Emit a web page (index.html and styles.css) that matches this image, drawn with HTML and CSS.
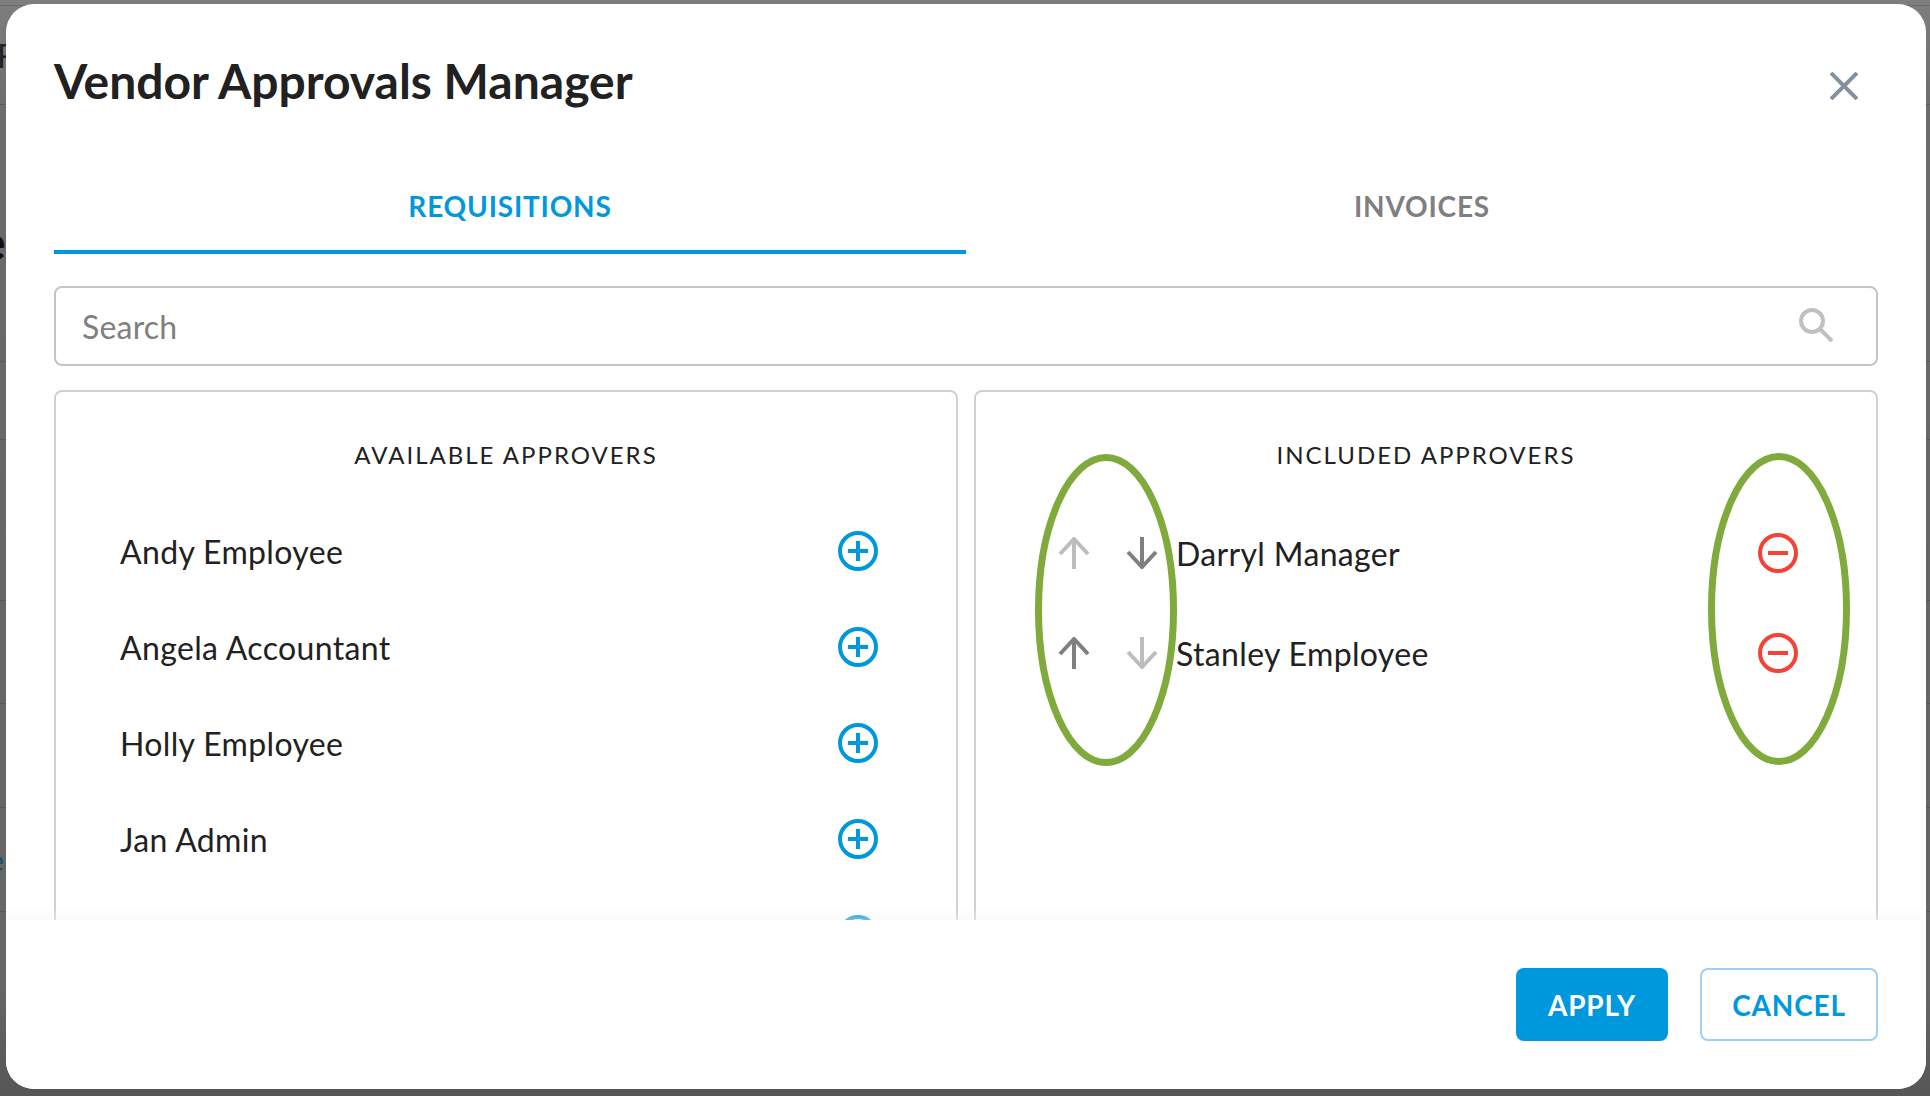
FILE: index.html
```html
<!DOCTYPE html>
<html lang="en">
<head>
<meta charset="utf-8">
<title>Vendor Approvals Manager</title>
<link rel="stylesheet" href="styles.css">
</head>
<body>
<div class="backdrop">
  <i class="bline l1"></i><i class="bline l2"></i><i class="bline l3"></i><i class="bline l4"></i>
  <i class="bline l5"></i><i class="bline l6"></i><i class="bline l7"></i><i class="bline l8"></i>
  <span class="bletter b-f">F</span>
  <span class="bletter b-e">e</span>
  <span class="bletter b-c">e</span>
</div>
<div class="modal">
  <div class="modal-scroll">
    <header class="modal-head">
      <h1 class="modal-title">Vendor Approvals Manager</h1>
      <svg class="close" viewBox="0 0 28 28"><path d="M1 1L27 27M27 1L1 27"/></svg>
    </header>
    <nav class="tabs">
      <div class="tab tab-active">REQUISITIONS</div>
      <div class="tab">INVOICES</div>
    </nav>
    <div class="search">
      <span class="search-text">Search</span>
      <svg class="search-icon" viewBox="0 0 36 36"><circle cx="13" cy="13" r="11"/><path d="M21 21L33 33"/></svg>
    </div>
    <div class="panels">
      <section class="panel">
        <h2 class="panel-title">AVAILABLE APPROVERS</h2>
        <ul class="avail">
          <li class="avail-row"><span class="avail-name">Andy Employee</span><svg class="circle-icon plus" viewBox="0 0 40 40"><circle cx="20" cy="20" r="18"/><path d="M10 20H30M20 10V30"/></svg></li>
          <li class="avail-row"><span class="avail-name">Angela Accountant</span><svg class="circle-icon plus" viewBox="0 0 40 40"><circle cx="20" cy="20" r="18"/><path d="M10 20H30M20 10V30"/></svg></li>
          <li class="avail-row"><span class="avail-name">Holly Employee</span><svg class="circle-icon plus" viewBox="0 0 40 40"><circle cx="20" cy="20" r="18"/><path d="M10 20H30M20 10V30"/></svg></li>
          <li class="avail-row"><span class="avail-name">Jan Admin</span><svg class="circle-icon plus" viewBox="0 0 40 40"><circle cx="20" cy="20" r="18"/><path d="M10 20H30M20 10V30"/></svg></li>
          <li class="avail-row"><span class="avail-name"></span><svg class="circle-icon plus" viewBox="0 0 40 40"><circle cx="20" cy="20" r="18"/><path d="M10 20H30M20 10V30"/></svg></li>
        </ul>
      </section>
      <section class="panel">
        <h2 class="panel-title">INCLUDED APPROVERS</h2>
        <ul class="incl">
          <li class="incl-row">
            <svg class="arrow off" viewBox="0 0 32 32"><path d="M16 32V2M2 17L16 2L30 17"/></svg>
            <svg class="arrow on" viewBox="0 0 32 32"><path d="M16 0V30M2 15L16 30L30 15"/></svg>
            <span class="incl-name">Darryl Manager</span>
            <svg class="circle-icon minus" viewBox="0 0 40 40"><circle cx="20" cy="20" r="18"/><path d="M10 20H30"/></svg>
          </li>
          <li class="incl-row">
            <svg class="arrow on" viewBox="0 0 32 32"><path d="M16 32V2M2 17L16 2L30 17"/></svg>
            <svg class="arrow off" viewBox="0 0 32 32"><path d="M16 0V30M2 15L16 30L30 15"/></svg>
            <span class="incl-name">Stanley Employee</span>
            <svg class="circle-icon minus" viewBox="0 0 40 40"><circle cx="20" cy="20" r="18"/><path d="M10 20H30"/></svg>
          </li>
        </ul>
      </section>
    </div>
    <div class="fade"></div>
  </div>
  <footer class="modal-foot">
    <button class="btn btn-apply">APPLY</button>
    <button class="btn btn-cancel">CANCEL</button>
  </footer>
  <svg class="oval oval-a" viewBox="0 0 142 312"><ellipse cx="71" cy="156" rx="67.5" ry="152.5"/></svg>
  <svg class="oval oval-b" viewBox="0 0 142 312"><ellipse cx="71" cy="156" rx="67.5" ry="152.5"/></svg>
</div>
</body>
</html>
```
FILE: styles.css
```css
* { box-sizing: border-box; }
html, body { margin: 0; height: 100%; }
body {
  position: relative;
  width: 1930px;
  height: 1096px;
  overflow: hidden;
  padding: 4px 4px 7px 6px;
  background: linear-gradient(180deg, #7e7e7e 0%, #6c6c6c 10%, #666 50%, #666 90%, #565656 100%);
  font-family: "Lato", "Liberation Sans", sans-serif;
  color: #212121;
}
.backdrop {
  position: absolute;
  inset: 0;
  overflow: hidden;
}
.bline {
  position: absolute;
  left: 0;
  width: 100%;
  height: 1px;
  background: rgba(0,0,0,.14);
}
.l1 { top: 5px; }
.l2 { top: 104px; }
.l3 { top: 361px; }
.l4 { top: 439px; }
.l5 { top: 600px; }
.l6 { top: 703px; }
.l7 { top: 807px; }
.l8 { top: 911px; }
.bletter {
  position: absolute;
  line-height: 1;
}
.b-f { left: -3px; top: 40px; font-size: 32px; color: #222; }
.b-e { left: -20px; top: 218px; font-size: 48px; font-weight: 700; color: #111; }
.b-c { left: -11px; top: 846px; font-size: 28px; color: #0f4f70; }
.modal {
  position: relative;
  width: 1920px;
  height: 1085px;
  background: #fff;
  border-radius: 28px;
  overflow: hidden;
  display: flex;
  flex-direction: column;
}
.modal-scroll {
  position: relative;
  height: 916px;
  flex: none;
  overflow: hidden;
  padding: 0 48px;
}
.modal-head {
  display: flex;
  align-items: center;
  justify-content: space-between;
  height: 156px;
}
.modal-title {
  margin: 0;
  font-size: 48px;
  font-weight: 700;
  line-height: 1;
  position: relative;
  top: -1px;
}
.close {
  width: 28px;
  height: 28px;
  margin-right: 20px;
  margin-top: 8px;
  fill: none;
  stroke: #82909f;
  stroke-width: 4;
}
.tabs {
  display: flex;
  width: 1824px;
  height: 94px;
}
.tab {
  flex: 1;
  text-align: center;
  font-size: 28px;
  font-weight: 700;
  letter-spacing: .8px;
  color: #7f7f7f;
  line-height: 34px;
  padding-top: 29px;
}
.tab-active {
  color: #0098dd;
  border-bottom: 4px solid #0098dd;
}
.search {
  display: flex;
  align-items: center;
  justify-content: space-between;
  width: 1824px;
  height: 80px;
  margin-top: 32px;
  padding: 0 41px 0 26px;
  border: 2px solid #c4c4c4;
  border-radius: 8px;
}
.search-text {
  font-size: 32px;
  letter-spacing: .2px;
  color: #7f7f7f;
}
.search-icon {
  width: 36px;
  height: 36px;
  fill: none;
  stroke: #c0c0c0;
  stroke-width: 4;
}
.panels {
  display: flex;
  gap: 16px;
  width: 1824px;
  margin-top: 24px;
}
.panel {
  width: 904px;
  height: 700px;
  border: 2px solid #d0d0d0;
  border-radius: 8px;
}
.panel-title {
  margin: 48px 0 0;
  text-align: center;
  font-size: 24px;
  font-weight: 400;
  letter-spacing: 2px;
  line-height: 30px;
}
.avail, .incl { list-style: none; margin: 0; padding: 0; }
.avail { padding: 33px 78px 0 64px; }
.avail-row {
  display: flex;
  align-items: center;
  justify-content: space-between;
  height: 96px;
  font-size: 32px;
  letter-spacing: .35px;
}
.incl { padding: 33px 78px 0 82px; }
.incl-row {
  display: flex;
  align-items: center;
  height: 100px;
  font-size: 32px;
  letter-spacing: .35px;
}
.incl-name { flex: 1; margin-left: 18px; }
.arrow {
  width: 32px;
  height: 32px;
  fill: none;
  stroke-width: 4;
}
.arrow + .arrow { margin-left: 36px; }
.arrow.on { stroke: #7f7f7f; }
.arrow.off { stroke: #bdbdbd; }
.circle-icon {
  width: 40px;
  height: 40px;
  fill: none;
  stroke-width: 4;
}
.plus { stroke: #0098dd; }
.minus { stroke: #f44336; }
.fade {
  position: absolute;
  left: 0;
  right: 0;
  bottom: 0;
  height: 14px;
  background: linear-gradient(180deg, rgba(245,245,245,0), rgba(245,245,245,.4));
}
.modal-foot {
  flex: 1;
  display: flex;
  justify-content: flex-end;
  gap: 32px;
  padding: 48px 48px 0 0;
  background: #fff;
}
.btn {
  height: 73px;
  font-family: inherit;
  font-size: 28px;
  font-weight: 700;
  letter-spacing: .8px;
  border-radius: 8px;
  padding: 0;
}
.btn-apply {
  width: 152px;
  background: #0098dd;
  border: 0;
  color: #fff;
}
.btn-cancel {
  width: 178px;
  background: #fff;
  border: 2px solid #9dd0f2;
  color: #0098dd;
}
.oval {
  position: absolute;
  width: 142px;
  height: 312px;
  fill: none;
  stroke: #80aa3c;
  stroke-width: 7;
}
.oval-a { left: 1029px; top: 450px; }
.oval-b { left: 1702px; top: 449px; }
```
